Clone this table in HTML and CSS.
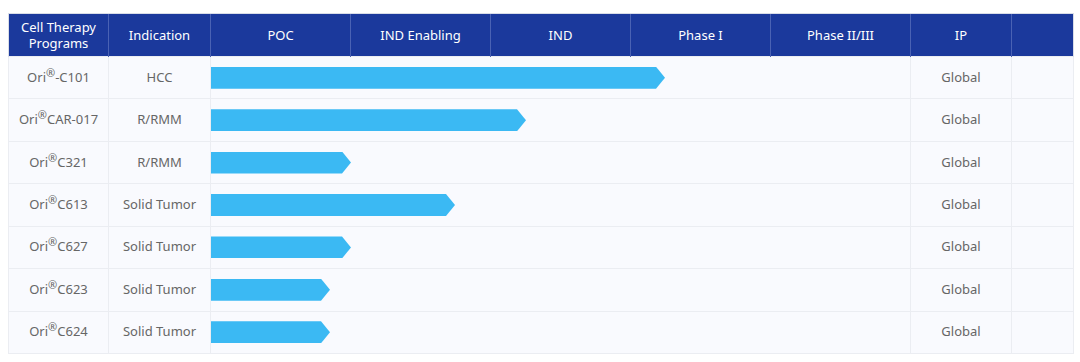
FILE: index.html
```html
<!DOCTYPE html>
<html>
<head>
<meta charset="utf-8">
<link rel="stylesheet" href="styles.css">
</head>
<body>
<table class="pipeline">
  <colgroup>
    <col class="c-prog"><col class="c-ind"><col class="c-ph"><col class="c-ph"><col class="c-ph"><col class="c-ph"><col class="c-ph"><col class="c-ip"><col class="c-last">
  </colgroup>
  <thead>
    <tr>
      <th>Cell Therapy Programs</th>
      <th>Indication</th>
      <th>POC</th>
      <th>IND Enabling</th>
      <th>IND</th>
      <th>Phase I</th>
      <th>Phase II/III</th>
      <th>IP</th>
      <th></th>
    </tr>
  </thead>
  <tbody>
    <tr><td>Ori<sup>®</sup>-C101</td><td>HCC</td><td colspan="5" class="bar-cell"><div class="bar" style="width:454px"></div></td><td>Global</td><td></td></tr>
    <tr><td>Ori<sup>®</sup>CAR-017</td><td>R/RMM</td><td colspan="5" class="bar-cell"><div class="bar" style="width:315px"></div></td><td>Global</td><td></td></tr>
    <tr><td>Ori<sup>®</sup>C321</td><td>R/RMM</td><td colspan="5" class="bar-cell"><div class="bar" style="width:140px"></div></td><td>Global</td><td></td></tr>
    <tr><td>Ori<sup>®</sup>C613</td><td>Solid Tumor</td><td colspan="5" class="bar-cell"><div class="bar" style="width:244px"></div></td><td>Global</td><td></td></tr>
    <tr><td>Ori<sup>®</sup>C627</td><td>Solid Tumor</td><td colspan="5" class="bar-cell"><div class="bar" style="width:140px"></div></td><td>Global</td><td></td></tr>
    <tr><td>Ori<sup>®</sup>C623</td><td>Solid Tumor</td><td colspan="5" class="bar-cell"><div class="bar" style="width:119px"></div></td><td>Global</td><td></td></tr>
    <tr><td>Ori<sup>®</sup>C624</td><td>Solid Tumor</td><td colspan="5" class="bar-cell"><div class="bar" style="width:119px"></div></td><td>Global</td><td></td></tr>
  </tbody>
</table>
</body>
</html>
```
FILE: styles.css
```css
html, body {
  margin: 0;
  padding: 0;
  background: #ffffff;
}
body {
  padding: 13px 0 0 8px;
  font-family: "Noto Sans", "Open Sans", sans-serif;
  font-size: 13px;
}
.pipeline {
  border-collapse: collapse;
  table-layout: fixed;
  width: 1065px;
}
.c-prog { width: 100px; }
.c-ind { width: 102px; }
.c-ph { width: 140px; }
.c-ip { width: 101px; }
.c-last { width: 62px; }
.pipeline thead tr { height: 43px; }
.pipeline th {
  background: #1b399c;
  color: #ffffff;
  font-weight: 400;
  line-height: 16px;
  padding: 0 4px;
  text-align: center;
  border-left: 1px solid #4a62b4;
  border-top: 1px solid #d9dde8;
}
.pipeline th:first-child { border-left: 1px solid #d9dde8; }
.pipeline th:last-child { border-right: 1px solid #d9dde8; }
.pipeline tbody tr { height: 42.43px; }
.pipeline td {
  background: #f9fafe;
  color: #666666;
  text-align: center;
  padding: 0 0 2px;
  border: 1px solid #ebedf2;
}
.pipeline td sup {
  font-size: 11px;
  line-height: 0;
  vertical-align: 5px;
}
.pipeline td.bar-cell { text-align: left; padding: 0; }
.bar {
  height: 22px;
  background: #3bb9f3;
  clip-path: polygon(0 0, calc(100% - 9px) 0, 100% 50%, calc(100% - 9px) 100%, 0 100%);
}
```
